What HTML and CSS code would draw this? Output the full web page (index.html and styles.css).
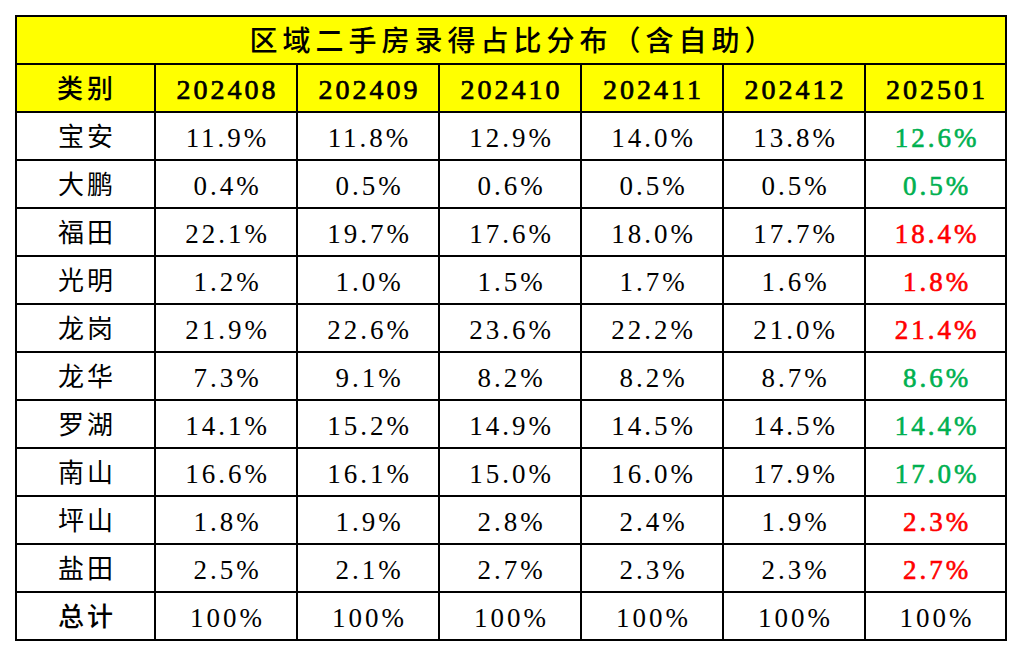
FILE: index.html
```html
<!DOCTYPE html>
<html lang="zh">
<head>
<meta charset="utf-8">
<title>区域二手房录得占比分布</title>
<link rel="stylesheet" href="styles.css">
</head>
<body>
<table class="sheet">
  <colgroup>
    <col class="c-name"><col class="c-m"><col class="c-m"><col class="c-m"><col class="c-m"><col class="c-m"><col class="c-last">
  </colgroup>
  <thead>
    <tr class="title-row"><th colspan="7" class="title">区域二手房录得占比分布（含自助）</th></tr>
    <tr class="head-row">
      <th class="name">类别</th><th>202408</th><th>202409</th><th>202410</th><th>202411</th><th>202412</th><th>202501</th>
    </tr>
  </thead>
  <tbody>
    <tr><td class="name">宝安</td><td>11.9%</td><td>11.8%</td><td>12.9%</td><td>14.0%</td><td>13.8%</td><td class="up">12.6%</td></tr>
    <tr><td class="name">大鹏</td><td>0.4%</td><td>0.5%</td><td>0.6%</td><td>0.5%</td><td>0.5%</td><td class="up">0.5%</td></tr>
    <tr><td class="name">福田</td><td>22.1%</td><td>19.7%</td><td>17.6%</td><td>18.0%</td><td>17.7%</td><td class="down">18.4%</td></tr>
    <tr><td class="name">光明</td><td>1.2%</td><td>1.0%</td><td>1.5%</td><td>1.7%</td><td>1.6%</td><td class="down">1.8%</td></tr>
    <tr><td class="name">龙岗</td><td>21.9%</td><td>22.6%</td><td>23.6%</td><td>22.2%</td><td>21.0%</td><td class="down">21.4%</td></tr>
    <tr><td class="name">龙华</td><td>7.3%</td><td>9.1%</td><td>8.2%</td><td>8.2%</td><td>8.7%</td><td class="up">8.6%</td></tr>
    <tr><td class="name">罗湖</td><td>14.1%</td><td>15.2%</td><td>14.9%</td><td>14.5%</td><td>14.5%</td><td class="up">14.4%</td></tr>
    <tr><td class="name">南山</td><td>16.6%</td><td>16.1%</td><td>15.0%</td><td>16.0%</td><td>17.9%</td><td class="up">17.0%</td></tr>
    <tr><td class="name">坪山</td><td>1.8%</td><td>1.9%</td><td>2.8%</td><td>2.4%</td><td>1.9%</td><td class="down">2.3%</td></tr>
    <tr><td class="name">盐田</td><td>2.5%</td><td>2.1%</td><td>2.7%</td><td>2.3%</td><td>2.3%</td><td class="down">2.7%</td></tr>
    <tr class="total"><td class="name">总计</td><td>100%</td><td>100%</td><td>100%</td><td>100%</td><td>100%</td><td>100%</td></tr>
  </tbody>
</table>
</body>
</html>
```
FILE: styles.css
```css
html, body {
  margin: 0;
  padding: 0;
  background: #ffffff;
}
body {
  padding: 15px 0 0 15px;
  font-family: "Liberation Serif", "Noto Sans CJK SC", serif;
  color: #000000;
}
.sheet {
  border-collapse: collapse;
  table-layout: fixed;
  width: 992px;
}
.c-name { width: 139px; }
.c-m { width: 142px; }
.c-last { width: 141px; }
.sheet th,
.sheet td {
  border: 2px solid #000000;
  padding: 4px 0 0 3px;
  height: 42px;
  text-align: center;
  vertical-align: middle;
  font-size: 27px;
  letter-spacing: 3px;
  font-weight: normal;
  line-height: 1;
  white-space: nowrap;
}
.title-row th,
.head-row th {
  background: #ffff00;
}
.sheet th.title {
  font-size: 28px;
  letter-spacing: 5px;
  padding-left: 5px;
  font-weight: 500;
}
.head-row th {
  font-weight: normal;
  -webkit-text-stroke: 0.7px #000000;
  font-size: 28px;
  letter-spacing: 3px;
}
.head-row th.name {
  font-size: 26px;
  letter-spacing: 4px;
  -webkit-text-stroke: 0;
  font-weight: 500;
}
.sheet td.name {
  font-size: 26px;
  letter-spacing: 3px;
}
.sheet .total td.name {
  font-weight: 500;
}
.sheet td.up {
  color: #00b050;
  -webkit-text-stroke: 0.6px #00b050;
}
.sheet td.down {
  color: #ff0000;
  -webkit-text-stroke: 0.6px #ff0000;
}
```
